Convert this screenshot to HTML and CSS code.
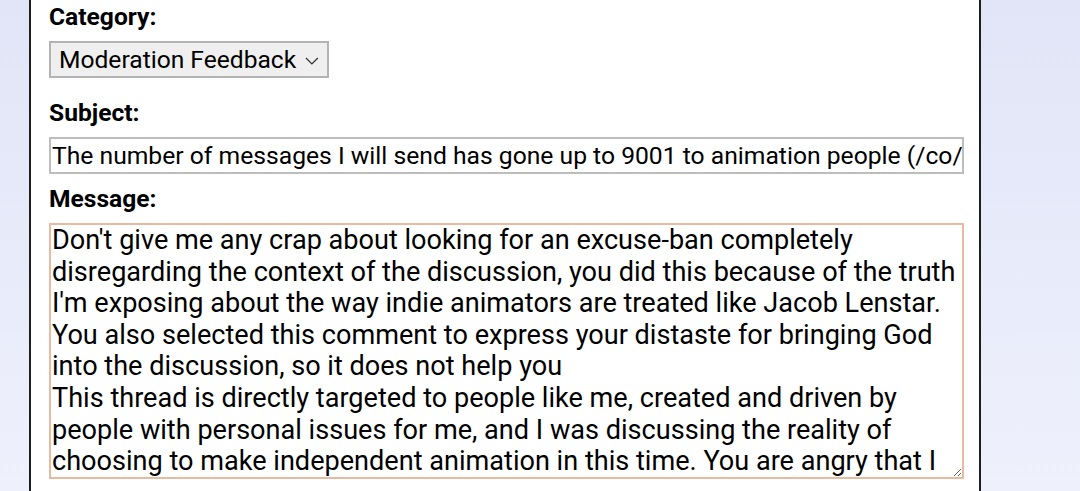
FILE: index.html
```html
<!DOCTYPE html>
<html lang="en">
<head>
<meta charset="utf-8">
<title>Feedback</title>
<link rel="stylesheet" href="styles.css">
</head>
<body>
<div class="page">
  <form class="panel">
    <label class="lbl lbl-category" for="cat">Category:</label>
    <div class="select">
      <span class="select-text">Moderation Feedback</span>
      <svg class="chev" width="14" height="8" viewBox="0 0 14 8"><path d="M1 1 L7 7 L13 1" fill="none" stroke="#333" stroke-width="1.3"/></svg>
    </div>
    <label class="lbl lbl-subject" for="subj">Subject:</label>
    <input id="subj" class="subject" type="text" value="The number of messages I will send has gone up to 9001 to animation people (/co/)">
    <label class="lbl lbl-message" for="msg">Message:</label>
    <textarea id="msg" class="message" wrap="off">Don't give me any crap about looking for an excuse-ban completely
disregarding the context of the discussion, you did this because of the truth
I'm exposing about the way indie animators are treated like Jacob Lenstar.
You also selected this comment to express your distaste for bringing God
into the discussion, so it does not help you
This thread is directly targeted to people like me, created and driven by
people with personal issues for me, and I was discussing the reality of
choosing to make independent animation in this time. You are angry that I
am telling the truth.</textarea>
  </form>
</div>
</body>
</html>
```

FILE: styles.css
```css
html, body {
  margin: 0;
  padding: 0;
  height: 100%;
}
body {
  background: linear-gradient(#e1e5f7, #eef0fc);
  font-family: Roboto, "Noto Sans", sans-serif;
  color: #000;
  overflow: hidden;
}
.page {
  height: 491px;
  display: flex;
}
.panel {
  margin-left: 29px;
  box-sizing: border-box;
  width: 952px;
  height: 491px;
  background: #fff;
  border-left: 2px solid #1e1e1e;
  border-right: 2px solid #1e1e1e;
  padding: 0 0 0 18px;
  display: flex;
  flex-direction: column;
  align-items: flex-start;
}
.lbl {
  display: block;
  font-weight: 700;
  font-size: 24.6px;
  line-height: 28px;
}
.lbl-category { margin-top: 2.5px; }
.select {
  margin-top: 10.5px;
  box-sizing: border-box;
  width: 280px;
  height: 37px;
  background: #efefef;
  border: 2px solid #b3b3b3;
  display: flex;
  align-items: center;
  padding: 0 8px 0 8px;
  gap: 9px;
}
.select-text {
  font-size: 24.6px;
  line-height: 28px;
  white-space: nowrap;
}
.chev { margin-top: 2px; }
.lbl-subject { margin-top: 21px; }
.subject {
  margin: 10px 0 0 0;
  box-sizing: border-box;
  width: 915px;
  height: 37px;
  border: 2px solid #bdbdbd;
  padding: 0 0 0 1px;
  font-family: Roboto, "Noto Sans", sans-serif;
  font-size: 24.68px;
  color: #000;
  background: #fff;
  outline: none;
}
.lbl-message { margin-top: 11px; }
.message {
  margin: 10px 0 0 0;
  box-sizing: border-box;
  width: 915px;
  height: 256px;
  border: 2px solid #e8bba1;
  padding: 0 1px;
  font-family: Roboto, "Noto Sans", sans-serif;
  font-size: 27.1px;
  line-height: 31.6px;
  color: #000;
  background: #fff;
  overflow: hidden;
  resize: both;
  white-space: pre;
  outline: none;
}
```
